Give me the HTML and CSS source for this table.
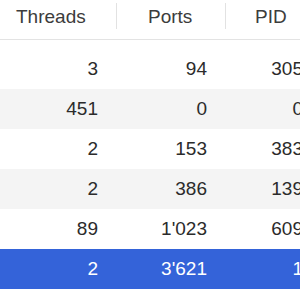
FILE: index.html
```html
<!DOCTYPE html>
<html>
<head>
<meta charset="utf-8">
<link rel="stylesheet" href="styles.css">
</head>
<body>
<div class="view">
  <div class="table">
    <div class="header">
      <div class="hcell h1">Threads</div>
      <div class="sep"></div>
      <div class="hcell h2">Ports</div>
      <div class="sep"></div>
      <div class="hcell h3">PID</div>
    </div>
    <div class="rows">
      <div class="row"><div class="c1">3</div><div class="c2">94</div><div class="c3">305</div></div>
      <div class="row alt"><div class="c1">451</div><div class="c2">0</div><div class="c3">0</div></div>
      <div class="row"><div class="c1">2</div><div class="c2">153</div><div class="c3">383</div></div>
      <div class="row alt"><div class="c1">2</div><div class="c2">386</div><div class="c3">139</div></div>
      <div class="row"><div class="c1">89</div><div class="c2">1'023</div><div class="c3">609</div></div>
      <div class="row selected"><div class="c1">2</div><div class="c2">3'621</div><div class="c3">1</div></div>
    </div>
  </div>
</div>
</body>
</html>
```

FILE: styles.css
```css
html, body {
  margin: 0;
  padding: 0;
  overflow: hidden;
  background: #ffffff;
}

.view {
  width: 300px;
  height: 300px;
  overflow: hidden;
  font-family: "Liberation Sans", Arial, sans-serif;
  font-size: 19px;
}

.table {
  width: 400px;
}

.header {
  display: flex;
  height: 39px;
  border-bottom: 1px solid #e3e3e3;
  color: #3c3c3c;
}

.hcell {
  line-height: 21px;
  padding-top: 6px;
  white-space: nowrap;
  box-sizing: border-box;
}

.h1 { width: 116px; padding-left: 16px; }
.h2 { width: 108px; padding-left: 31px; }
.h3 { width: 120px; padding-left: 29px; }

.sep {
  width: 1px;
  height: 26px;
  margin-top: 3px;
  background: #e2e2e2;
}

.rows {
  padding-top: 9px;
}

.row {
  display: grid;
  grid-template-columns: 117px 108px 96px;
  height: 40px;
  line-height: 40px;
  color: #2b2b2b;
}

.row > div {
  text-align: right;
  padding-right: 18px;
  white-space: nowrap;
}

.row > .c1 { padding-right: 19px; }

.alt {
  background: #f4f4f4;
}

.selected {
  background: #3463d9;
  color: #ffffff;
}
```
